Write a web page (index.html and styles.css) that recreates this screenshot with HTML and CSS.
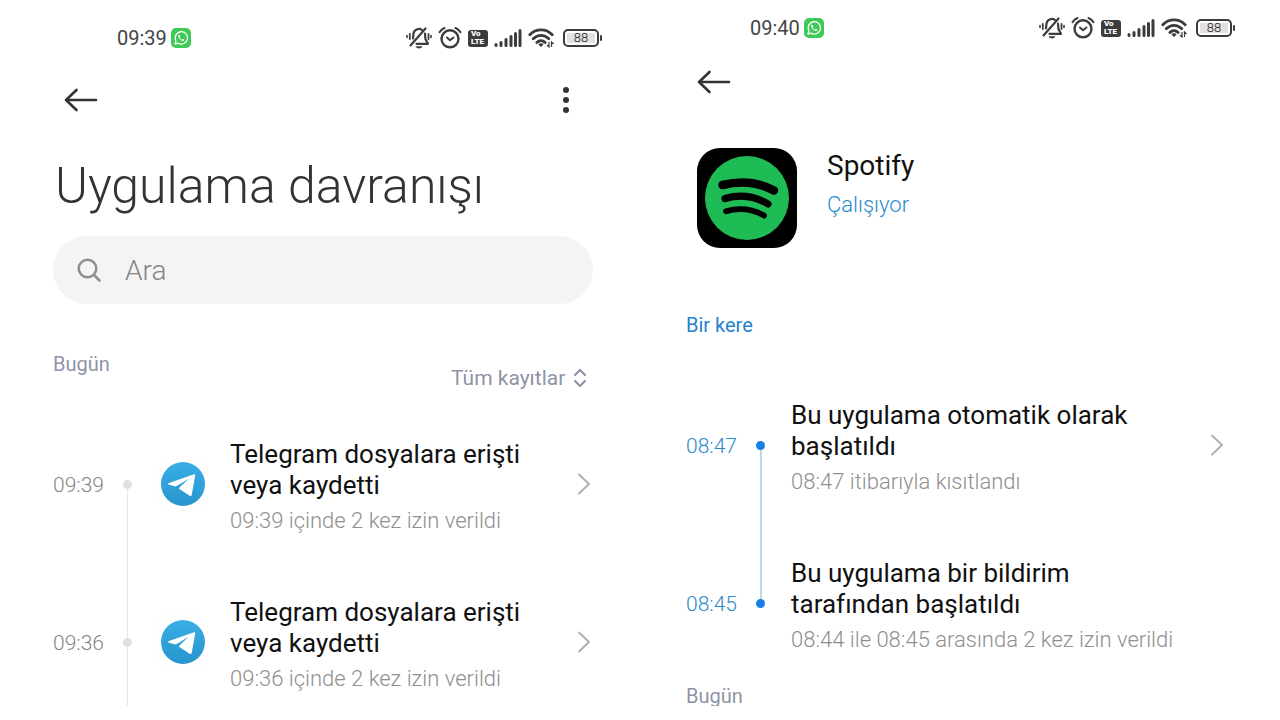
FILE: index.html
```html
<!DOCTYPE html>
<html lang="tr">

<head>
    <meta charset="UTF-8">
    <meta name="viewport" content="width=device-width, initial-scale=1.0">
    <title>Uygulama davranışı</title>
    <link rel="stylesheet" href="styles.css">
</head>

<body>
    <!-- Ortak ikonlar -->
    <svg class="sprite" aria-hidden="true">
        <symbol id="whatsapp" viewBox="0 0 20 20">
            <rect width="20" height="20" rx="5" fill="#3fc956" />
            <path d="M4 16l.9-3.2A6.2 6.2 0 1 1 7.200 15.200z" fill="none" stroke="#fff" stroke-width="1.3" stroke-linejoin="round" />
            <path d="M8 6.700c-1.500.8-.8 2.800.9 4.500s3.600 2.400 4.400 1.100c.3-.6.100-.8-1.500-1.500l-.9.900c-1-.4-1.900-1.300-2.300-2.300l.7-.8C8.800 7 8.500 6.500 8 6.700z" fill="#fff" />
        </symbol>
        <symbol id="bell" viewBox="0 0 26 24">
            <g fill="none" stroke="#3c3c3c" stroke-width="2.200" stroke-linecap="round">
                <path d="M4.500 19.500L19.500 2.500" />
                <path d="M16 4C13.500 2 8.500 3 7.500 7.500l-.5 5M19 7.500l.4 5.500 2.600 4.800H10.500" stroke-linejoin="round" />
                <path d="M3.800 8v5M22.500 8v5" stroke-width="1.800" />
                <path d="M1 9.500v2M25 9.500v2" stroke-width="1.600" />
            </g>
            <path d="M9.500 20.300h7q-1 2.200-3.500 2.200t-3.500-2.200z" fill="#3c3c3c" />
        </symbol>
        <symbol id="alarm" viewBox="0 0 24 24">
            <g fill="none" stroke="#3c3c3c" stroke-width="2.400" stroke-linecap="round">
                <circle cx="12" cy="12.800" r="8.500" />
                <path d="M1.500 6.200Q3.500 3 6.500 2M22.500 6.200Q20.500 3 17.500 2" stroke-width="2" />
                <path d="M9 11.500l3 2.700 3.500-2.700" stroke-width="2" stroke-linejoin="round" />
            </g>
        </symbol>
        <symbol id="signal" viewBox="0 0 28 20">
            <g stroke="#3c3c3c" stroke-width="3" stroke-linecap="round">
                <path d="M2 17.500v-1M7 17.500v-3M12 17.500v-6M17 17.500v-9M21.500 17.500v-12M26 17.500v-15" />
            </g>
        </symbol>
        <symbol id="wifi" viewBox="0 0 26 20">
            <g fill="none" stroke="#3c3c3c" stroke-width="2.800" stroke-linecap="round">
                <path d="M1.800 6.700C8 .3 18 .3 24.200 6.700" />
                <path d="M5.200 10.800c4.600-4.600 11-4.600 15.600 0" />
                <path d="M8.800 14.500c2.500-2.500 5.900-2.500 8.400 0" />
            </g>
            <path d="M10.300 16q2.700-1.500 5.400 0L13 19.300z" fill="#3c3c3c" />
            <path d="M21 14v5l-2-2M23.500 19v-5l2 2" fill="none" stroke="#3c3c3c" stroke-width="1.200" />
        </symbol>
        <symbol id="back" viewBox="0 0 34 24">
            <path d="M32 12H2M12.500 2L2 12l10.500 10" fill="none" stroke="#333" stroke-width="2.600" stroke-linecap="round" stroke-linejoin="round" />
        </symbol>
        <symbol id="chevron" viewBox="0 0 14 24">
            <path d="M2 2.500l10 9.500L2 21.500" fill="none" stroke="#b0b0b0" stroke-width="2" stroke-linecap="round" stroke-linejoin="round" />
        </symbol>
        <symbol id="telegram" viewBox="0 0 44 44">
            <linearGradient id="telegram-blue" x1="0" y1="0" x2="0" y2="1">
                <stop offset="0" stop-color="#3aaee6" />
                <stop offset="1" stop-color="#2794cd" />
            </linearGradient>
            <circle cx="22" cy="22" r="22" fill="url(#telegram-blue)" />
            <path d="M33 12.200Q34.500 12 34.200 13.500L30.700 33q-.5 1.700-2 .8l-10-6.600c-.8-.7-.7-1.300 0-2l9-8.500-12 7.300q-1 .6-2 .3L8 22.800q-2-.9 0-1.800z" fill="#fff" />
        </symbol>
    </svg>

    <main class="screens">
        <section class="screen screen-list">
            <div class="status-bar">
                <span class="clock">09:39</span>
                <svg class="icon-whatsapp"><use href="#whatsapp" /></svg>
                <div class="status-icons">
                    <svg class="icon-bell"><use href="#bell" /></svg>
                    <svg class="icon-alarm"><use href="#alarm" /></svg>
                    <span class="volte">Vo<br>LTE</span>
                    <svg class="icon-signal"><use href="#signal" /></svg>
                    <svg class="icon-wifi"><use href="#wifi" /></svg>
                    <span class="battery"><span class="battery-level">88</span></span>
                </div>
            </div>

            <header class="toolbar">
                <button class="icon-button" aria-label="Geri"><svg class="icon-back"><use href="#back" /></svg></button>
                <button class="icon-button" aria-label="Diğer seçenekler">
                    <svg class="icon-more" viewBox="0 0 8 28" fill="#333">
                        <circle cx="4" cy="4" r="3" />
                        <circle cx="4" cy="14" r="3" />
                        <circle cx="4" cy="24" r="3" />
                    </svg>
                </button>
            </header>

            <h1 class="page-title">Uygulama davranışı</h1>

            <label class="search">
                <svg class="icon-search" viewBox="0 0 24 24" fill="none" stroke="#8f8f8f" stroke-width="2.500" stroke-linecap="round">
                    <circle cx="10.500" cy="10.500" r="8.800" />
                    <path d="M17 17l5.500 5.500" />
                </svg>
                <input class="search-input" type="text" placeholder="Ara" aria-label="Ara">
            </label>

            <div class="list-head">
                <h2 class="day">Bugün</h2>
                <label class="filter">
                    <select class="filter-select" aria-label="Kayıt filtresi">
                        <option>Tüm kayıtlar</option>
                    </select>
                    <svg class="icon-sort" viewBox="0 0 12 18" fill="none" stroke="#8f93a6" stroke-width="2.200" stroke-linecap="round" stroke-linejoin="round">
                        <path d="M1 6l5-5 5 5M1 12l5 5 5-5" />
                    </svg>
                </label>
            </div>

            <ul class="timeline">
                <li class="entry">
                    <span class="entry-time">09:39</span>
                    <span class="track"><span class="dot"></span></span>
                    <span class="app-badge"><svg class="icon-telegram"><use href="#telegram" /></svg></span>
                    <div class="entry-text">
                        <h3 class="entry-title">Telegram dosyalara erişti veya kaydetti</h3>
                        <p class="entry-note">09:39 içinde 2 kez izin verildi</p>
                    </div>
                    <button class="icon-button entry-more" aria-label="Ayrıntılar"><svg class="icon-chevron"><use href="#chevron" /></svg></button>
                </li>
                <li class="entry">
                    <span class="entry-time">09:36</span>
                    <span class="track"><span class="dot"></span></span>
                    <span class="app-badge"><svg class="icon-telegram"><use href="#telegram" /></svg></span>
                    <div class="entry-text">
                        <h3 class="entry-title">Telegram dosyalara erişti veya kaydetti</h3>
                        <p class="entry-note">09:36 içinde 2 kez izin verildi</p>
                    </div>
                    <button class="icon-button entry-more" aria-label="Ayrıntılar"><svg class="icon-chevron"><use href="#chevron" /></svg></button>
                </li>
            </ul>
        </section>

        <section class="screen screen-detail">
            <div class="status-bar">
                <span class="clock">09:40</span>
                <svg class="icon-whatsapp"><use href="#whatsapp" /></svg>
                <div class="status-icons">
                    <svg class="icon-bell"><use href="#bell" /></svg>
                    <svg class="icon-alarm"><use href="#alarm" /></svg>
                    <span class="volte">Vo<br>LTE</span>
                    <svg class="icon-signal"><use href="#signal" /></svg>
                    <svg class="icon-wifi"><use href="#wifi" /></svg>
                    <span class="battery"><span class="battery-level">88</span></span>
                </div>
            </div>

            <header class="toolbar">
                <button class="icon-button" aria-label="Geri"><svg class="icon-back"><use href="#back" /></svg></button>
            </header>

            <div class="app">
                <svg class="app-logo" viewBox="0 0 100 100">
                    <rect width="100" height="100" rx="23" fill="#000" />
                    <circle cx="50" cy="50" r="42" fill="#1fbb55" />
                    <g fill="none" stroke="#000" stroke-linecap="round">
                        <path d="M25.500 37Q54 30 77 42.500" stroke-width="8.500" />
                        <path d="M28 50.500Q51 44 71 56" stroke-width="7.200" />
                        <path d="M29 63.300Q49 57.500 67 67.500" stroke-width="5.800" />
                    </g>
                </svg>
                <div class="app-info">
                    <h1 class="app-name">Spotify</h1>
                    <p class="app-state">Çalışıyor</p>
                </div>
            </div>

            <h2 class="section-title">Bir kere</h2>

            <ul class="timeline timeline-active">
                <li class="entry">
                    <span class="entry-time">08:47</span>
                    <span class="track"><span class="dot"></span></span>
                    <div class="entry-text">
                        <h3 class="entry-title">Bu uygulama otomatik olarak başlatıldı</h3>
                        <p class="entry-note">08:47 itibarıyla kısıtlandı</p>
                    </div>
                    <button class="icon-button entry-more" aria-label="Ayrıntılar"><svg class="icon-chevron"><use href="#chevron" /></svg></button>
                </li>
                <li class="entry">
                    <span class="entry-time">08:45</span>
                    <span class="track"><span class="dot"></span></span>
                    <div class="entry-text">
                        <h3 class="entry-title">Bu uygulama bir bildirim tarafından başlatıldı</h3>
                        <p class="entry-note">08:44 ile 08:45 arasında 2 kez izin verildi</p>
                    </div>
                    <span class="entry-more"></span>
                </li>
            </ul>

            <h2 class="day">Bugün</h2>
        </section>
    </main>
</body>

</html>
```
FILE: styles.css
```css
* {
    box-sizing: border-box;
    margin: 0;
    padding: 0;
}

body {
    font-family: Roboto, "Liberation Sans", sans-serif;
    background-color: #fff;
    color: #111;
}

svg {
    display: block;
    flex: none;
}

ul {
    list-style: none;
}

.sprite {
    position: absolute;
    width: 0;
    height: 0;
}

.screens {
    display: grid;
    grid-template-columns: 1fr 1fr;
    height: calc(100vh - 14px);
    margin-right: 14px;
    overflow: hidden;
}

.screen {
    padding: 24px 40px 0 53px;
}

.screen-detail {
    padding-top: 14px;
}

/* Durum çubuğu */
.status-bar {
    display: flex;
    align-items: center;
    gap: 4px;
    height: 28px;
    margin-right: -9px;
    padding-left: 64px;
}

.clock {
    font-size: 20px;
    color: #444;
}

.icon-whatsapp {
    width: 20px;
    height: 20px;
}

.status-icons {
    display: flex;
    align-items: center;
    gap: 6px;
    margin-left: auto;
}

.icon-bell {
    width: 26px;
    height: 24px;
}

.icon-alarm {
    width: 24px;
    height: 24px;
}

.volte {
    width: 20px;
    height: 17px;
    padding-left: 3px;
    border-radius: 3px;
    background-color: #3c3c3c;
    font-size: 8px;
    font-weight: 900;
    line-height: 8px;
    color: #fff;
}

.icon-signal {
    width: 28px;
    height: 20px;
}

.icon-wifi {
    width: 26px;
    height: 20px;
    margin-right: 3px;
}

.battery {
    position: relative;
    width: 36px;
    height: 18px;
    margin-right: 3px;
    padding: 2px;
    border: 2px solid #3c3c3c;
    border-radius: 5px;
}

.battery::after {
    content: "";
    position: absolute;
    top: 4px;
    right: -5px;
    width: 2px;
    height: 6px;
    border-radius: 1px;
    background-color: #3c3c3c;
}

.battery-level {
    display: block;
    background-color: #e2e2e2;
    font-size: 13px;
    font-weight: 300;
    line-height: 10px;
    text-align: center;
    color: #222;
}

/* Üst araç çubuğu */
.toolbar {
    display: flex;
    align-items: center;
    justify-content: space-between;
    height: 48px;
    margin-top: 24px;
    padding: 0 23px 0 11px;
}

.screen-detail .toolbar {
    margin-top: 16px;
}

.icon-button {
    border: 0;
    background: none;
    cursor: pointer;
}

.icon-back {
    width: 34px;
    height: 24px;
}

.icon-more {
    width: 8px;
    height: 28px;
}

.page-title {
    margin-top: 30px;
    padding-left: 2px;
    font-size: 50px;
    font-weight: 300;
    line-height: 64px;
    color: #333;
}

.search {
    display: flex;
    align-items: center;
    gap: 24px;
    height: 68px;
    margin-top: 18px;
    padding: 0 24px;
    border-radius: 34px;
    background-color: #f4f4f4;
}

.icon-search {
    width: 24px;
    height: 24px;
}

.search-input {
    flex: 1;
    min-width: 0;
    border: 0;
    outline: 0;
    background: none;
    font-family: inherit;
    font-size: 28px;
    font-weight: 300;
    color: #333;
}

.search-input::placeholder {
    color: #858585;
}

.list-head {
    display: flex;
    align-items: flex-start;
    justify-content: space-between;
    height: 55px;
    margin-top: 46px;
    padding-right: 7px;
}

.day {
    font-size: 20px;
    font-weight: 400;
    line-height: 28px;
    color: #8f93a6;
}

.filter {
    display: flex;
    align-items: center;
    gap: 8px;
    margin-top: 14px;
}

.filter-select {
    appearance: none;
    border: 0;
    background: none;
    font-family: inherit;
    font-size: 21px;
    line-height: 28px;
    color: #8f93a6;
}

.icon-sort {
    width: 12px;
    height: 18px;
}

/* Zaman çizelgesi */
.entry {
    display: flex;
    align-items: center;
    height: 158px;
}

.entry-time {
    width: 66px;
    padding-top: 2px;
    font-size: 21px;
    font-weight: 300;
    color: #858585;
}

.track {
    display: flex;
    flex-direction: column;
    align-items: center;
    align-self: stretch;
    width: 17px;
    margin-right: 22px;
}

.track::before,
.track::after {
    content: "";
    flex: 1;
    width: 1px;
    background-color: #e8e8e8;
}

.entry:first-child .track::before {
    background: none;
}

.dot {
    width: 9px;
    height: 9px;
    border-radius: 50%;
    background-color: #e0e0e0;
}

.app-badge {
    display: grid;
    place-items: center;
    width: 50px;
    height: 56px;
    margin-right: 22px;
    border: 1px solid #fcfcfc;
    border-radius: 12px;
}

.icon-telegram {
    width: 44px;
    height: 44px;
}

.entry-text {
    flex: 1;
    padding: 4px 20px 0 0;
}

.entry-title {
    font-size: 26px;
    font-weight: 400;
    line-height: 31px;
}

.entry-note {
    margin-top: 7px;
    font-size: 22px;
    font-weight: 300;
    line-height: 26px;
    color: #8f8f8f;
}

.entry-more {
    width: 14px;
    margin-right: 2px;
}

.icon-chevron {
    width: 14px;
    height: 24px;
}

.timeline-active .entry-time {
    color: #2b8acb;
}

.timeline-active .dot {
    background-color: #157fe6;
}

.timeline-active .track::before,
.timeline-active .track::after {
    width: 2px;
    background-color: #bcd9e6;
}

.timeline-active .entry:first-child .track::before,
.timeline-active .entry:last-child .track::after {
    background: none;
}

/* Uygulama ayrıntısı */
.app {
    display: flex;
    gap: 30px;
    margin-top: 42px;
    padding-left: 11px;
}

.app-logo {
    width: 100px;
    height: 100px;
}

.app-name {
    font-size: 28px;
    font-weight: 400;
    line-height: 36px;
}

.app-state {
    margin-top: 6px;
    font-size: 22px;
    font-weight: 300;
    line-height: 30px;
    color: #2b8acb;
}

.section-title {
    margin-top: 62px;
    font-size: 20px;
    font-weight: 400;
    line-height: 30px;
    color: #2483cf;
}

.timeline-active {
    margin-top: 26px;
}
```
